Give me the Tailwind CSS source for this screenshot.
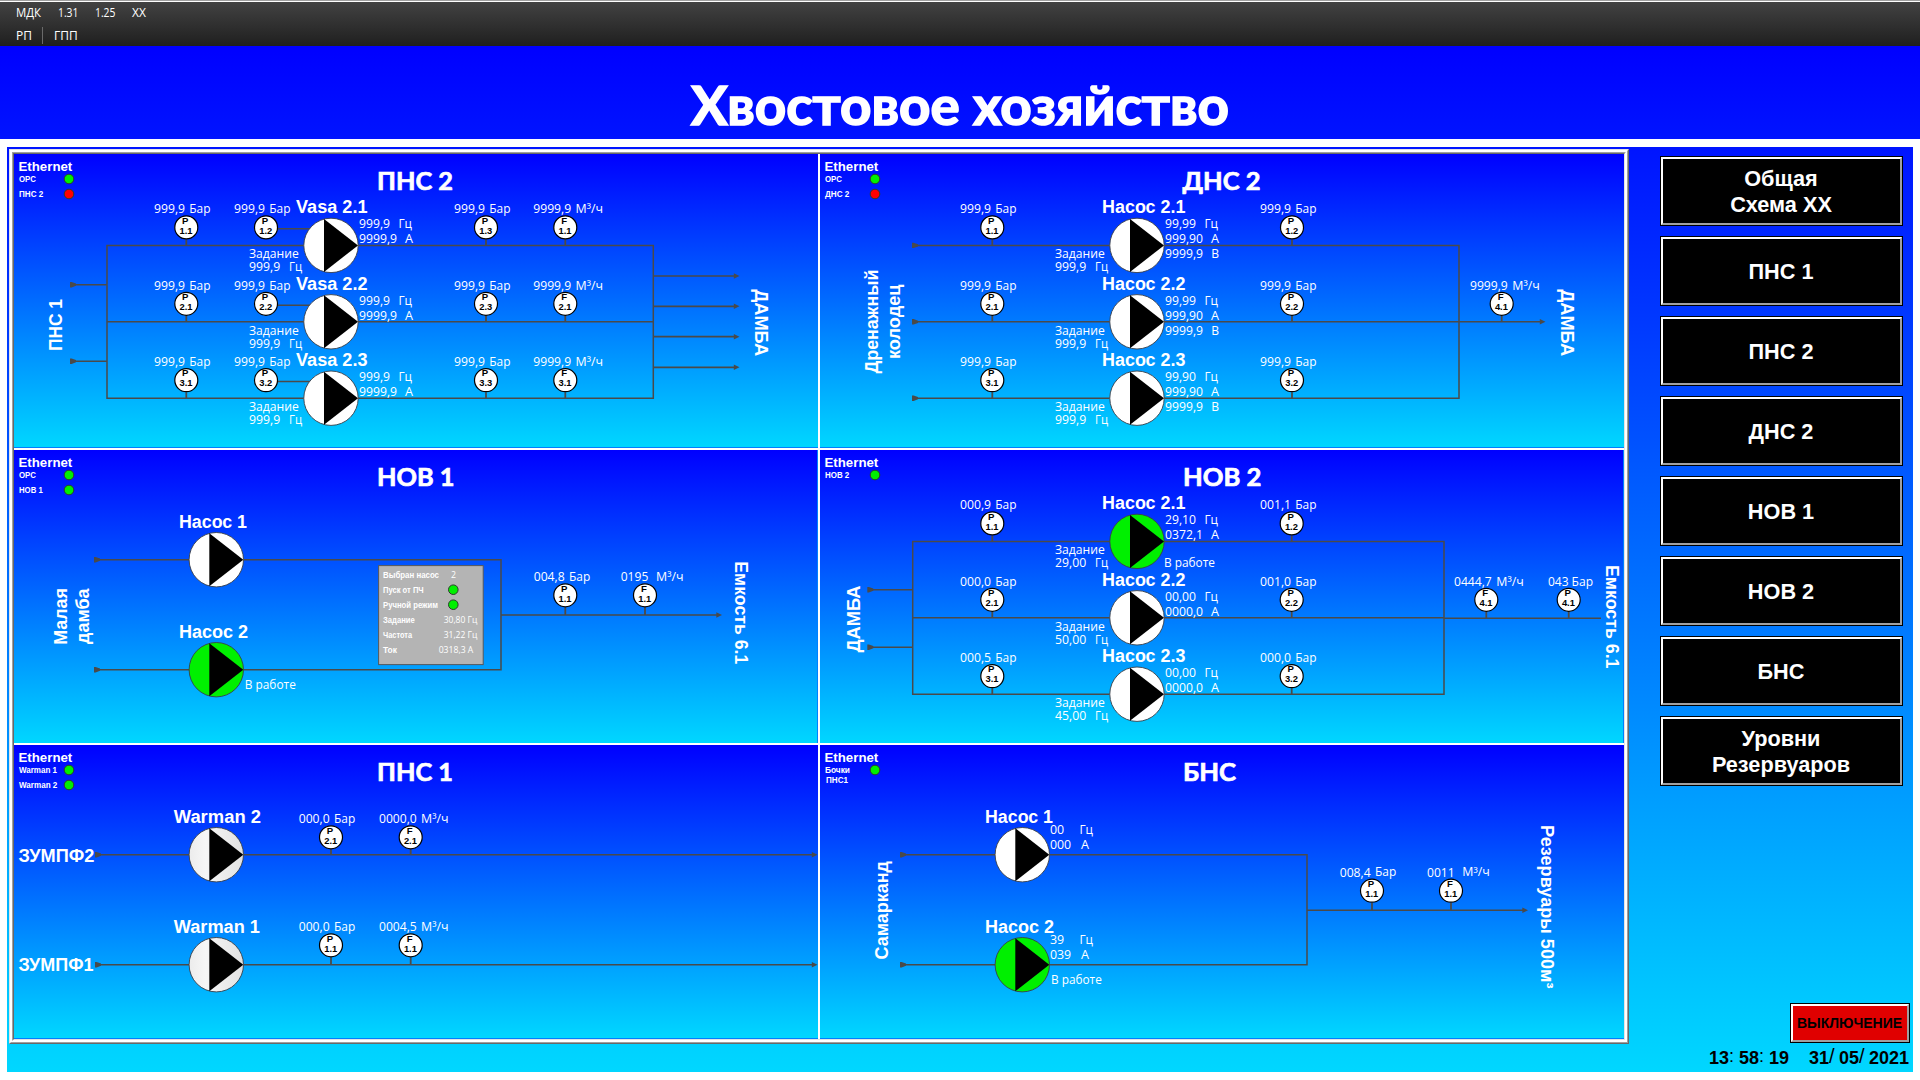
<!DOCTYPE html>
<html lang="ru">
<head>
<meta charset="utf-8">
<title>Хвостовое хозяйство</title>
<script src="https://cdn.jsdelivr.net/npm/@tailwindcss/browser@4"></script>
</head>
<body class="w-[1920px] h-[1080px] overflow-hidden bg-white flex flex-col font-['Liberation_Sans',Arial,sans-serif]">

<header class="h-[46px] shrink-0 border-t border-[#a0a0a0]">
  <div class="h-[45px] border-t border-white bg-linear-to-b/srgb from-[#424242] to-[#1f1f1f] text-white text-[12px] font-['Open_Sans',sans-serif] pl-[16px]">
    <nav class="flex h-[22px] items-center leading-none">
      <span class="w-[42px]"><span class="inline-block origin-left scale-x-[0.95]">МДК</span></span>
      <span class="w-[37px]"><span class="inline-block origin-left scale-x-[0.86]">1.31</span></span>
      <span class="w-[37px]"><span class="inline-block origin-left scale-x-[0.86]">1.25</span></span>
      <span><span class="inline-block origin-left">XX</span></span>
    </nav>
    <nav class="flex h-[22px] items-center leading-none pt-px">
      <span class="w-[26px]"><span class="inline-block origin-left">РП</span></span>
      <span class="h-[17px] w-px bg-[#6a6a6a] mr-[11px]"></span>
      <span><span class="inline-block origin-left">ГПП</span></span>
    </nav>
  </div>
</header>

<div class="h-[93px] shrink-0 bg-linear-to-b/srgb from-[#0000ff] to-[#0014ff]">
  <svg class="block" width="1920" height="93" viewBox="0 46 1920 93">
    <text x="691" y="125" textLength="538" lengthAdjust="spacingAndGlyphs" class="fill-white stroke-white stroke-[1.6px] text-[53px] font-bold font-['Lato','Open_Sans',sans-serif]">Хвостовое хозяйство</text>
  </svg>
</div>

<main class="mt-[8px] mx-[7px] h-[925px] shrink-0 bg-linear-to-b/srgb from-[#0014ff] to-[#00d7ff] flex">
  <section class="mt-[2px] ml-[2px] w-[1620px] h-[895px] shrink-0 border border-t-[#e3e3e3] border-l-[#e3e3e3] border-r-[#696969] border-b-[#696969]">
    <div class="h-full border border-t-white border-l-white border-r-[#a0a0a0] border-b-[#a0a0a0]">
      <div class="h-full border border-white">
        <div class="h-full border border-t-[#a0a0a0] border-l-[#a0a0a0] border-r-white border-b-white">
          <div class="h-full border border-t-[#696969] border-l-[#696969] border-r-[#e3e3e3] border-b-[#e3e3e3]">
            <div class="h-full bg-white grid grid-cols-[804px_804px] grid-rows-[294px_293px_294px] gap-x-[2px]">
              <div class="bg-linear-to-b/srgb from-[#0000ff] to-[#00d7ff] border-b border-[#0080ff]"><svg id="pns2" class="block" width="804" height="293" viewBox="14 154 804 293"></svg></div>
              <div class="bg-linear-to-b/srgb from-[#0000ff] to-[#00d7ff] border-b border-[#0080ff]"><svg id="dns2" class="block" width="804" height="293" viewBox="820 154 804 293"></svg></div>
              <div class="mt-[2px] h-[293px] bg-linear-to-b/srgb from-[#0000ff] to-[#00d7ff] border-r border-[#0080ff]"><svg id="nov1" class="block" width="803" height="293" viewBox="14 450 803 293"></svg></div>
              <div class="mt-[2px] h-[293px] bg-linear-to-b/srgb from-[#0000ff] to-[#00d7ff] border-r border-[#0080ff]"><svg id="nov2" class="block" width="803" height="293" viewBox="820 450 803 293"></svg></div>
              <div class="mt-[4px] h-[294px] bg-linear-to-b/srgb from-[#0000ff] to-[#00d7ff] border-b border-[#0080ff]"><svg id="pns1" class="block" width="804" height="293" viewBox="14 745 804 293"></svg></div>
              <div class="mt-[4px] h-[294px] bg-linear-to-b/srgb from-[#0000ff] to-[#00d7ff] border-b border-[#0080ff]"><svg id="bns" class="block" width="804" height="293" viewBox="820 745 804 293"></svg></div>
            </div>
          </div>
        </div>
      </div>
    </div>
  </section>

  <aside class="ml-[31px] w-[253px] flex flex-col pt-[9px]">
    <nav id="menu" class="flex flex-col gap-[10px] w-[243px]"></nav>
    <button class="mt-auto self-end mr-[3px] w-[120px] h-[40px] border border-black">
      <span class="flex h-full items-center justify-center border-2 border-t-white border-l-white border-r-[#a0a0a0] border-b-[#a0a0a0] bg-[#e00000] text-black font-bold text-[14px] pr-px">ВЫКЛЮЧЕНИЕ</span>
    </button>
    <div class="h-[29px] flex justify-between pl-[49px] pr-[4px] pt-[5px] text-[18px] leading-[20px] font-bold text-black">
      <div class="flex"><span class="w-[20px]">13</span><span class="w-[10px] font-normal -mt-[2px]">:</span><span class="w-[20px]">58</span><span class="w-[10px] font-normal -mt-[2px]">:</span><span class="w-[20px]">19</span></div>
      <div class="flex"><span class="w-[20px]">31</span><span class="w-[10px] font-normal text-[20px] -mt-[2px]">/</span><span class="w-[20px]">05</span><span class="w-[10px] font-normal text-[20px] -mt-[2px]">/</span><span class="w-[40px]">2021</span></div>
    </div>
  </aside>
</main>

<script>
const BOLD = "fill-white font-bold text-[18px]";
const TITLE = "fill-white stroke-white stroke-[0.7px] font-bold text-[25.5px] font-['Lato','Open_Sans',sans-serif]";
const ETH = "fill-white font-bold text-[13.7px]";
const TINY = "fill-white font-bold text-[8.8px]";
const VAL = "fill-white text-[13px] font-['Open_Sans',sans-serif]";
const VALS = "fill-white text-[9.5px] font-['Open_Sans',sans-serif]";
const TAG = "fill-black font-bold text-[9.6px]";
const PIPE = "#4a4a4a", GREEN = "#00f000", RED = "#ff0000";

// Text from x1 to x2 on baseline y
const t = (x1, x2, y, s, c) => `<text x="${x1}" y="${y}" textLength="${x2 - x1}" lengthAdjust="spacingAndGlyphs" class="${c}">${s}</text>`;
const up = (x, y, len, s) => `<text transform="translate(${x} ${y}) rotate(-90)" textLength="${len}" lengthAdjust="spacingAndGlyphs" class="${BOLD}">${s}</text>`;
const down = (x, y, len, s) => `<text transform="translate(${x} ${y}) rotate(90)" textLength="${len}" lengthAdjust="spacingAndGlyphs" class="${BOLD}">${s}</text>`;
const line = (d, w = 1.5) => `<path d="${d}" fill="none" stroke="${PIPE}" stroke-width="${w}"/>`;
const tail = (x, y) => `<path d="M${x} ${y - 2.7}h1.6l4.4 1.6v2.2l-4.4 1.6h-1.6z" fill="${PIPE}"/>`;
const head = (x, y) => `<path d="M${x - 5.7} ${y - 2.8}L${x} ${y}l-5.7 2.8z" fill="${PIPE}"/>`;
const dot = (x, y, c) => `<circle cx="${x}" cy="${y}" r="4.8" fill="${c}" stroke="#2d3c2d" stroke-width="1"/>`;
const gauge = (x, y, l, n, stem) => (stem ? line(`M${x} ${y + 12}V${stem}`, 1.8) : "") +
  `<circle cx="${x}" cy="${y}" r="11.5" fill="#fff" stroke="#000" stroke-width="1.2"/>` +
  `<text x="${x - 1}" y="${y - 3.8}" text-anchor="middle" class="${TAG}">${l}</text>` +
  t(x - 6.8, x + 6.2, y + 6.2, n, TAG);
const bar = (x, y, v) => t(x, x + 31, y - .2, v, VAL) + t(x + 35.3, x + 56.5, y - .3, "Бар", VAL);
const cubic = `М<tspan dy="1.2">³</tspan><tspan dy="-1.2">/ч</tspan>`;
const flow = (x, y, v, ux = x + 43) => t(x, x + (v.length > 4 ? 37.8 : 27.6), y - .2, v, VAL) + t(ux - .7, ux + 26.8, y - .3, cubic, VAL);
const pump = (x, y, c = "#fff") => `<circle cx="${x}" cy="${y}" r="27.2" fill="${c}" stroke="#3a3f48" stroke-width=".9"/>` +
  `<path d="M${x - 7} ${y - 26.5}L${x + 27} ${y}L${x - 7} ${y + 26.5}z" fill="#000"/>`;
const task = (x, y, v) => t(x - 82, x - 32.3, y + 12.7, "Задание", VAL) + t(x - 82, x - 50.8, y + 26, v, VAL) + t(x - 42, x - 29, y + 26, "Гц", VAL);
const meas = (x, y, hz, a, v) => t(x + 28, x + 59, y - 17.2, hz, VAL) + t(x + 67.5, x + 81, y - 17.2, "Гц", VAL) +
  t(x + 28, x + 66, y - 2.2, a, VAL) + t(x + 74, x + 82, y - 2.2, "А", VAL) +
  (v ? t(x + 28, x + 66, y + 12.8, v, VAL) + t(x + 74.2, x + 82, y + 12.8, "В", VAL) : "");
const eth = (x, y, rows) => t(x - .5, x + 53.3, y, "Ethernet", ETH) + rows.map(([n, w, c], i) =>
  t(x, x + w, y + 10.5 + 15 * i, n, TINY) + dot(x + 50, y + 7.7 + 15 * i, c)).join("");
const draw = (id, parts) => document.getElementById(id).innerHTML = parts.join("");
const rows1 = [245.4, 321.8, 398.2], rows2 = [541.4, 617.8, 694.2];

draw("pns2", [
  eth(19, 171.3, [["OPC", 17, GREEN], ["ПНС 2", 24.3, RED]]),
  t(377, 453, 190, "ПНС 2", TITLE),
  line("M107 245.4H653.3V398.2H107zM107 321.8H653.3M72 284.7H107M72 361.2H107"),
  tail(70, 284.7), tail(70, 361.2),
  ...[276, 306.3, 336.7, 367.3].map(y => line(`M653.3 ${y}H735`, 1.7) + head(739.5, y)),
  ...rows1.map((y, i) => {
    const n = i + 1, g = y - 18, b = y - 32;
    return line(`M277 ${y - 16.6}H310`) + pump(331, y) + t(296, 367.5, y - 32.2, `Vasa 2.${n}`, BOLD) +
      gauge(186.3, g, "P", `${n}.1`, y) + gauge(266, g, "P", `${n}.2`) + gauge(486, g, "P", `${n}.3`, y) + gauge(565.3, g, "F", `${n}.1`, y) +
      bar(154, b, "999,9") + bar(234, b, "999,9") + bar(454, b, "999,9") + flow(533.3, b, "9999,9") +
      task(331, y, "999,9") + meas(331, y, "999,9", "9999,9");
  }),
  up(62, 351, 52, "ПНС 1"), down(755, 289.2, 67, "ДАМБА"),
]);

draw("dns2", [
  eth(825, 171.3, [["OPC", 17, GREEN], ["ДНС 2", 24.3, RED]]),
  t(1182.5, 1260.5, 190, "ДНС 2", TITLE),
  line("M914 245.4H1459V398.2H914M914 321.8H1541"), head(1545.5, 321.8),
  ...rows1.map((y, i) => {
    const n = i + 1, g = y - 18, b = y - 32;
    return tail(912, y) + pump(1137, y) + t(1102, 1185.5, y - 32.2, `Насос 2.${n}`, BOLD) +
      gauge(992.3, g, "P", `${n}.1`, y) + gauge(1292, g, "P", `${n}.2`, y) +
      bar(960, b, "999,9") + bar(1260, b, "999,9") +
      task(1137, y, "999,9") + meas(1137, y, i == 2 ? "99,90" : "99,99", "999,90", "9999,9");
  }),
  gauge(1501.7, 303.8, "F", "4.1", 321.8), flow(1470, 289.8, "9999,9"),
  up(878, 373.5, 104, "Дренажный"), up(900, 359, 74.5, "колодец"), down(1561, 289.2, 67, "ДАМБА"),
]);

draw("nov1", [
  eth(19, 467.3, [["OPC", 17, GREEN], ["НОВ 1", 23.7, GREEN]]),
  t(377, 454.5, 486, "НОВ 1", TITLE),
  line("M96 559.7H501V669.7H96M501 615H718"), tail(94, 559.7), tail(94, 669.7), head(722, 615),
  pump(216.3, 559.7), pump(216.3, 669.7, GREEN),
  t(179, 247, 528, "Насос 1", BOLD), t(179, 248, 638, "Насос 2", BOLD),
  t(244.8, 295.8, 689.3, "В работе", VAL),
  `<rect x="378.6" y="565.6" width="104.6" height="99" fill="#b4b4b4" stroke="#55585c" stroke-width="1"/>`,
  t(383, 439, 577.8, "Выбран насос", TINY), t(383, 423.7, 592.8, "Пуск от ПЧ", TINY), t(383, 438, 607.8, "Ручной режим", TINY),
  t(383, 414.8, 622.8, "Задание", TINY), t(383, 412, 637.8, "Частота", TINY), t(383, 397, 652.8, "Ток", TINY),
  t(451, 456, 577.8, "2", VALS), dot(453.3, 589.7, GREEN), dot(453.3, 604.7, GREEN),
  t(443.7, 477.3, 623, "30,80 Гц", VALS), t(443.7, 477.3, 638, "31,22 Гц", VALS), t(438.7, 473.3, 653, "0318,3 А", VALS),
  gauge(565.3, 595.3, "P", "1.1", 615), gauge(645, 595.3, "F", "1.1", 615),
  bar(533.7, 581.3, "004,8"), flow(620.7, 581.3, "0195", 656.7),
  up(67, 644.7, 56.5, "Малая"), up(89.3, 644, 55.5, "дамба"), down(735, 561.3, 103, "Емкость 6.1"),
]);

const nov2 = [["000,9", "001,1", "29,00", "29,10", "0372,1"], ["000,0", "001,0", "50,00", "00,00", "0000,0"], ["000,5", "000,0", "45,00", "00,00", "0000,0"]];
draw("nov2", [
  eth(825, 467.3, [["НОВ 2", 24.3, GREEN]]),
  t(1183, 1261.5, 486, "НОВ 2", TITLE),
  line("M912.7 541.4H1444V694.2H912.7zM912.7 617.8H1444M1444 618.2H1601M869 589.7H912.7M869 647.2H912.7"),
  tail(867.3, 589.7), tail(867.3, 647.2),
  ...rows2.map((y, i) => {
    const n = i + 1, g = y - 18, b = y - 32, r = nov2[i];
    return pump(1137, y, i ? "#fff" : GREEN) + t(1102, 1185.5, y - 32.2, `Насос 2.${n}`, BOLD) +
      gauge(992.3, g, "P", `${n}.1`, y) + gauge(1291.7, g, "P", `${n}.2`, y) +
      bar(960, b, r[0]) + bar(1260, b, r[1]) + task(1137, y, r[2]) + meas(1137, y, r[3], r[4]);
  }),
  t(1164, 1215, 567.2, "В работе", VAL),
  gauge(1486.3, 599.8, "F", "4.1", 618), gauge(1568.7, 599.8, "P", "4.1", 618),
  flow(1454, 586, "0444,7"), t(1548, 1568.6, 586, "043", VAL), t(1571.6, 1593, 585.5, "Бар", VAL),
  up(860, 652.5, 67, "ДАМБА"), down(1605.7, 565, 103.5, "Емкость 6.1"),
]);

draw("pns1", [
  `<defs><linearGradient id="steel"><stop offset="0" stop-color="#ececec"/><stop offset=".3" stop-color="#f6f6f6"/><stop offset="1" stop-color="#e2e2e2"/></linearGradient></defs>`,
  eth(19, 762.3, [["Warman 1", 38, GREEN], ["Warman 2", 38.3, GREEN]]),
  t(377, 453, 781, "ПНС 1", TITLE),
  ...[[854.7, 837.3, 823.3, 2, "0000,0"], [964.7, 945.3, 931.3, 1, "0004,5"]].map(([y, g, b, n, f]) =>
    line(`M97 ${y}H813`) + tail(95, y) + head(817.5, y) + pump(216.3, y, "url(#steel)") +
    t(173.7, 261 - (n == 1), y - 32, `Warman ${n}`, BOLD) +
    gauge(331, g, "P", `${n}.1`, y) + gauge(410.7, g, "F", `${n}.1`, y) +
    bar(298.7, b, "000,0") + flow(379, b, f, 421.7)),
  t(18.5, 94.3, 862, "ЗУМПФ2", BOLD), t(18.5, 93.5, 970.8, "ЗУМПФ1", BOLD),
]);

draw("bns", [
  eth(825, 762.3, [["Бочки", 25, GREEN]]), t(826, 848, 783, "ПНС1", TINY),
  t(1183, 1236, 781, "БНС", TITLE),
  line("M902 854.7H1307V964.7H902M1307 910.3H1524"), head(1528, 910.3),
  ...[[854.7, 1, "#fff", "00", "000"], [964.7, 2, GREEN, "39", "039"]].map(([y, n, c, hz, a]) =>
    tail(900, y) + pump(1022.3, y, c) + t(985, 1053 + (n - 1), y - 32, `Насос ${n}`, BOLD) +
    t(1050, 1064.2, y - 20.4, hz, VAL) + t(1079.5, 1093, y - 20.4, "Гц", VAL) +
    t(1050, 1071.2, y - 5.4, a, VAL) + t(1081, 1089, y - 5.4, "А", VAL)),
  t(1051, 1101.8, 984.3, "В работе", VAL),
  gauge(1372, 890.7, "P", "1.1", 910.3), gauge(1451, 890.7, "F", "1.1", 910.3),
  bar(1339.7, 876.7, "008,4"), flow(1427, 876.7, "0011", 1463),
  up(888, 959.5, 98.5, "Самарканд"), down(1540.7, 825, 163.5, "Резервуары 500м³"),
]);

document.getElementById("menu").innerHTML = ["Общая<br>Схема XX", "ПНС 1", "ПНС 2", "ДНС 2", "НОВ 1", "НОВ 2", "БНС", "Уровни<br>Резервуаров"].map(s =>
  `<button class="h-[70px] border border-black"><span class="flex h-full items-center justify-center border-2 border-t-white border-l-white border-r-[#a0a0a0] border-b-[#a0a0a0] bg-black text-white font-bold text-[21.7px] leading-[26px] text-center pt-px pr-px">${s}</span></button>`).join("");
</script>
</body>
</html>
